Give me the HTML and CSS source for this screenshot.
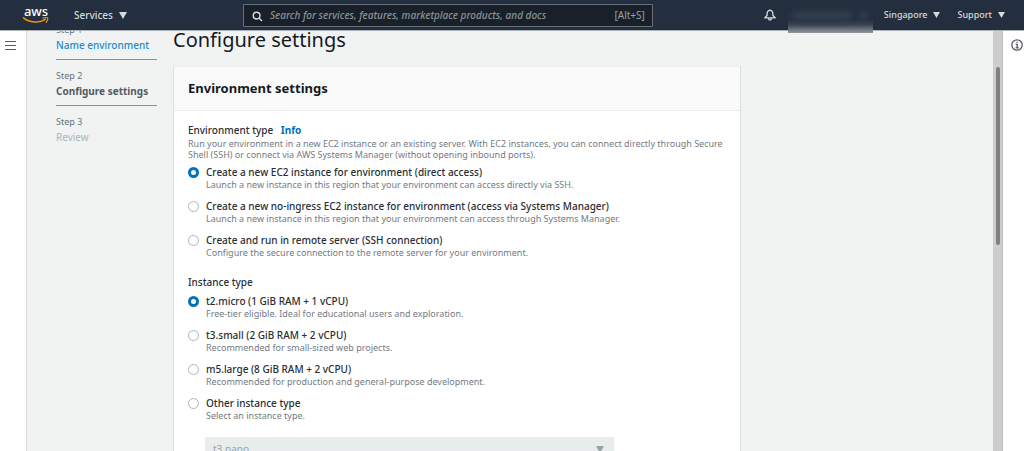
FILE: index.html
```html
<!DOCTYPE html>
<html lang="en">
<head>
<meta charset="utf-8">
<title>Configure settings</title>
<meta name="viewport" content="width=device-width, initial-scale=1">
<link rel="stylesheet" href="styles.css">
</head>
<body>
<div class="app">
  <header class="topbar">
    <a class="logo" href="#" aria-label="aws">
      <span class="logo-word">aws</span>
      <svg class="logo-smile" viewBox="0 0 26 7" aria-hidden="true">
        <path d="M.5 .8C6.500 5.600 16 6.500 22.300 2.300" fill="none" stroke="#f79400" stroke-width="1.500" stroke-linecap="round"/>
        <path d="M20 1.100C22.400 .3 24 .4 24.700 1C25 2 24.400 4 23.200 5.400" fill="none" stroke="#f79400" stroke-width="1.200" stroke-linecap="round"/>
      </svg>
    </a>
    <button class="menu services" type="button">Services <svg class="caret" viewBox="0 0 8 7" aria-hidden="true"><path d="M0 0h8L4 7z"/></svg></button>
    <label class="search">
      <svg class="search-icon" viewBox="0 0 12 12" aria-hidden="true"><circle cx="5" cy="5" r="3.700"/><path d="M7.800 7.800 11 11"/></svg>
      <input type="search" aria-label="Search" placeholder="Search for services, features, marketplace products, and docs">
      <span class="shortcut">[Alt+S]</span>
    </label>
    <button class="bell" type="button" aria-label="Notifications">
      <svg viewBox="0 0 12 12" aria-hidden="true"><path d="M.8 8.800h10.400L8.900 6.500V4.500C8.900 2.500 7.600 1.400 6 1.400S3.100 2.500 3.100 4.500v2z"/><path d="M6 1.400V.4M4.500 9.100a1.500 2 0 0 0 3 0"/></svg>
    </button>
    <button class="account" type="button" aria-label="Account"><span class="smudge"></span><span class="smudge smudge-short"></span></button>
    <button class="menu region" type="button">Singapore <svg class="caret caret-small" viewBox="0 0 8 7" aria-hidden="true"><path d="M0 0h8L4 7z"/></svg></button>
    <button class="menu support" type="button">Support <svg class="caret caret-small" viewBox="0 0 8 7" aria-hidden="true"><path d="M0 0h8L4 7z"/></svg></button>
  </header>

  <div class="workspace">
    <aside class="rail rail-left">
      <button type="button" aria-label="Open navigation"><svg class="burger" viewBox="0 0 11 9" aria-hidden="true"><path d="M0 .5h11M0 4.500h11M0 8.500h11"/></svg></button>
    </aside>

    <main class="viewport">
      <div class="page">
        <ol class="steps">
          <li class="step"><span class="step-no">Step 1</span><a class="step-name" href="#">Name environment</a></li>
          <li class="step current"><span class="step-no">Step 2</span><span class="step-name">Configure settings</span></li>
          <li class="step pending"><span class="step-no">Step 3</span><span class="step-name">Review</span></li>
        </ol>

        <form class="content">
          <h1>Configure settings</h1>
          <section class="card">
            <h2>Environment settings</h2>
            <div class="card-body">
              <fieldset>
                <legend>Environment type <a class="info" href="#">Info</a></legend>
                <p class="hint">Run your environment in a new EC2 instance or an existing server. With EC2 instances, you can connect directly through Secure Shell (SSH) or connect via AWS Systems Manager (without opening inbound ports).</p>
                <div class="options">
                  <label class="option"><input type="radio" name="env" checked><span class="label">Create a new EC2 instance for environment (direct access)</span><span class="desc">Launch a new instance in this region that your environment can access directly via SSH.</span></label>
                  <label class="option"><input type="radio" name="env"><span class="label">Create a new no-ingress EC2 instance for environment (access via Systems Manager)</span><span class="desc">Launch a new instance in this region that your environment can access through Systems Manager.</span></label>
                  <label class="option"><input type="radio" name="env"><span class="label">Create and run in remote server (SSH connection)</span><span class="desc">Configure the secure connection to the remote server for your environment.</span></label>
                </div>
              </fieldset>
              <fieldset>
                <legend>Instance type</legend>
                <div class="options">
                  <label class="option"><input type="radio" name="size" checked><span class="label">t2.micro (1 GiB RAM + 1 vCPU)</span><span class="desc">Free-tier eligible. Ideal for educational users and exploration.</span></label>
                  <label class="option"><input type="radio" name="size"><span class="label">t3.small (2 GiB RAM + 2 vCPU)</span><span class="desc">Recommended for small-sized web projects.</span></label>
                  <label class="option"><input type="radio" name="size"><span class="label">m5.large (8 GiB RAM + 2 vCPU)</span><span class="desc">Recommended for production and general-purpose development.</span></label>
                  <label class="option"><input type="radio" name="size"><span class="label">Other instance type</span><span class="desc">Select an instance type.</span></label>
                </div>
                <div class="select">
                  <select aria-label="Other instance type" disabled><option>t3.nano</option></select>
                  <svg class="caret" viewBox="0 0 8 7" aria-hidden="true"><path d="M0 0h8L4 7z"/></svg>
                </div>
              </fieldset>
            </div>
          </section>
        </form>
      </div>
    </main>

    <div class="scrollbar"><div class="thumb"></div></div>

    <aside class="rail rail-right">
      <button type="button" aria-label="Open help"><svg class="info-icon" viewBox="0 0 12 12" aria-hidden="true"><circle cx="6" cy="6" r="5.200"/><path d="M4.700 5.300H6.200V8.700M4.500 8.800h3.200M5.400 3.300h1.200"/></svg></button>
    </aside>
  </div>
</div>
</body>
</html>
```
FILE: styles.css
```css
* { box-sizing: border-box; }

body {
  margin: 0;
  font-family: "Noto Sans", "Open Sans", sans-serif;
  font-size: 10px;
  line-height: 14px;
  color: #16191f;
}

button, input, select { font: inherit; color: inherit; }
button { padding: 0; border: 0; background: none; cursor: pointer; }
a { text-decoration: none; }
svg { display: block; overflow: visible; }

.app { display: flex; flex-direction: column; height: 100vh; overflow: hidden; }

/* Top bar */
.topbar {
  position: relative;
  z-index: 1;
  display: flex;
  align-items: center;
  flex: none;
  height: 30px;
  padding: 0 19px 0 23px;
  background: #232f3e;
  color: #d5dbdb;
}
.logo { display: flex; flex-direction: column; align-items: center; width: 26px; color: #fff; }
.logo-word { font-size: 13px; line-height: 11px; font-weight: 500; }
.logo-smile { width: 26px; height: 7px; }
.menu { display: flex; align-items: center; gap: 6px; flex: none; white-space: nowrap; font-size: 9px; font-weight: 500; }
.services { margin-left: 25px; font-size: 10px; }
.caret { width: 8px; height: 7px; fill: currentColor; }
.caret-small { width: 7px; height: 6px; }
.search {
  display: flex;
  align-items: center;
  flex: 1;
  height: 23px;
  margin-left: 116px;
  padding: 0 7px 0 8px;
  border: 1px solid #687078;
  border-radius: 1px;
  background: #1a202a;
}
.search-icon { width: 11px; height: 11px; margin-top: 3px; fill: none; stroke: #d5dbdb; stroke-width: 1.5; }
.search input { flex: 1; min-width: 0; padding: 0; margin-left: 7px; border: 0; outline: 0; background: none; }
.search input::placeholder { color: #879596; opacity: 1; font-style: italic; font-weight: 500; }
.shortcut { color: #95a0a3; }
.bell { margin-left: 111px; }
.bell svg { width: 12px; height: 12px; fill: none; stroke: #d5dbdb; stroke-width: 1.3; stroke-linejoin: round; }
.account {
  display: flex;
  align-items: center;
  align-self: flex-start;
  justify-content: space-between;
  flex: none;
  width: 85px;
  height: 33px;
  margin-left: 12px;
  padding: 0 6px 3px 4px;
  background: linear-gradient(#232f3e 60%, #3c4654 76%, #9298a0);
}
.smudge { width: 60px; height: 7px; background: #364250; filter: blur(3px); }
.smudge-short { width: 8px; }
.region { margin-left: 11px; }
.support { margin-left: 17px; }

/* Workspace */
.workspace { display: flex; flex: 1; min-height: 0; border-top: 1px solid #aab2b8; background: #f1f3f3; }
.rail { flex: none; padding-top: 8px; background: #fff; }
.rail-left { width: 27px; padding-left: 5px; border-right: 1px solid #d5dbdb; }
.rail-right { width: 21px; padding-left: 8px; }
.burger { width: 11px; height: 9px; margin-top: 2px; stroke: #545b64; stroke-width: 1; }
.info-icon { width: 12px; height: 12px; fill: none; stroke: #545b64; stroke-width: 1.3; }
.viewport { flex: 1; min-width: 0; overflow: hidden; }
.scrollbar { flex: none; width: 10px; padding: 36px 3px 0; border-right: 1px solid #c0c0c0; background: #cdcdcd; }
.thumb { width: 4px; height: 178px; border-radius: 2px; background: #808080; }

/* The page is shown partly scrolled */
.page { display: flex; gap: 16px; margin-top: -18px; padding: 0 16px 0 29px; }

.steps { flex: none; width: 101px; margin: 0; padding: 1px 0 0; list-style: none; }
.step { display: flex; flex-direction: column; gap: 2px; padding: 10px 0 7px; border-bottom: 1px solid #879196; color: #687078; }
.step:last-child { border-bottom: 0; }
.step-no { font-size: 9px; line-height: 12px; }
.step-name { font-weight: 500; }
a.step-name { color: #1f8acb; }
.current .step-name { font-weight: 700; color: #545b64; }
.pending .step-name { color: #aab7b8; font-weight: 400; }

.content { flex: 1; min-width: 0; max-width: 568px; }
h1 { margin: 13px 0 12px; font-size: 20px; line-height: 28px; font-weight: 400; }
.card { border: 1px solid #d9dede; border-top-color: #eaeded; background: #fff; }
h2 { margin: 0; padding: 11px 14px; border-bottom: 1px solid #eaeded; background: #fafafa; font-size: 13px; line-height: 21px; font-weight: 700; }
.card-body { display: flex; flex-direction: column; gap: 16px; padding: 12px 14px 20px; }
fieldset { min-width: 0; margin: 0; padding: 0; border: 0; }
legend { padding: 0; font-weight: 500; color: #2a2e35; }
.info { margin-left: 5px; font-weight: 700; color: #0073bb; }
.hint { margin: 1px 0 0; font-size: 9px; line-height: 11px; color: #737b83; }
.options { display: flex; flex-direction: column; gap: 8px; padding-top: 5px; }
.option { display: grid; grid-template-columns: 11px 1fr; column-gap: 7px; align-items: center; }
.option input { appearance: none; width: 11px; height: 11px; margin: 0; border: 1px solid #aab7b8; border-radius: 50%; background: #fff; }
.option input:checked { border: 3px solid #0073bb; }
.label { font-weight: 500; color: #2a2e35; }
.desc { grid-column: 2; font-size: 9px; line-height: 12px; color: #737b83; }
.select { display: flex; align-items: center; width: 409px; max-width: 100%; height: 24px; margin: 15px 0 0 17px; padding-right: 10px; background: #e9ecec; color: #95a5a6; }
.select select { flex: 1; appearance: none; padding: 0 8px; border: 0; background: none; opacity: 1; }
```
